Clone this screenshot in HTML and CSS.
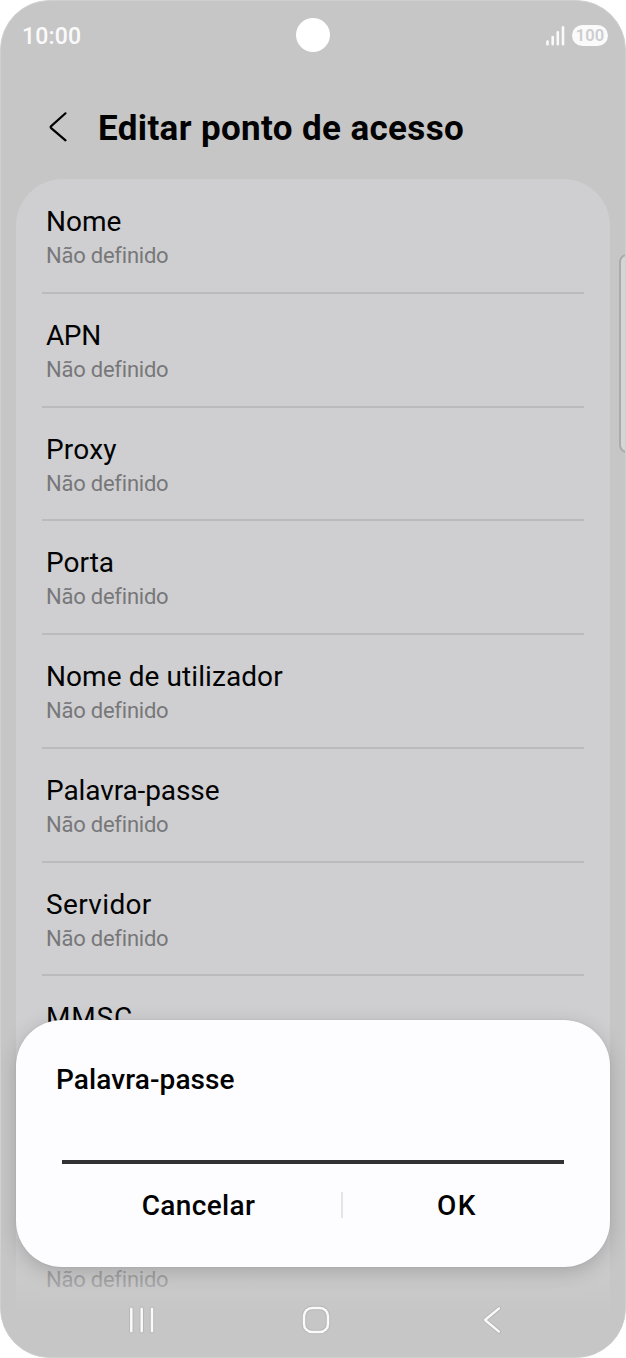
FILE: index.html
```html
<!DOCTYPE html>
<html lang="pt">
<head>
<meta charset="utf-8">
<title>Editar ponto de acesso</title>
<link rel="stylesheet" href="styles.css">
</head>
<body>
<div class="phone">
  <header class="status">
    <span class="time">10:00</span>
    <span class="camera"></span>
    <span class="indicators">
      <svg class="signal" width="20" height="21" viewBox="0 0 20 21"><path d="M1.5 16.5v2.7M6.7 12v7.2M11.8 7.3v11.9M17 2.3v16.9" fill="none" stroke="#fafafa" stroke-width="2.6" stroke-linecap="round"/></svg>
      <span class="battery">100</span>
    </span>
  </header>
  <div class="heading">
    <svg width="20" height="32" viewBox="0 0 20 32"><path d="M16.5 2.3 2.2 15.1q-1.1 1 0 2L16.5 29.3" fill="none" stroke="#000" stroke-width="2.2" stroke-linecap="round"/></svg>
    <h1>Editar ponto de acesso</h1>
  </div>
  <main class="card">
    <div class="row"><div class="label">Nome</div><div class="value">Não definido</div></div>
    <div class="row"><div class="label apn">APN</div><div class="value">Não definido</div></div>
    <div class="row"><div class="label proxy">Proxy</div><div class="value">Não definido</div></div>
    <div class="row"><div class="label">Porta</div><div class="value">Não definido</div></div>
    <div class="row"><div class="label user">Nome de utilizador</div><div class="value">Não definido</div></div>
    <div class="row"><div class="label pass">Palavra-passe</div><div class="value">Não definido</div></div>
    <div class="row"><div class="label server">Servidor</div><div class="value">Não definido</div></div>
    <div class="row"><div class="label mmsc">MMSC</div></div>
    <div class="row"></div>
    <div class="row"><div class="label"></div><div class="value">Não definido</div></div>
  </main>
  <div class="edge-handle"></div>
  <div class="fade"></div>
  <section class="dialog">
    <h2>Palavra-passe</h2>
    <div class="field"></div>
    <div class="actions">
      <div class="action cancel"><span>Cancelar</span></div>
      <div class="separator"></div>
      <div class="action ok"><span>OK</span></div>
    </div>
  </section>
  <nav class="nav">
    <svg width="30" height="32" viewBox="0 0 30 32"><g fill="none" stroke-linecap="round"><path d="M4.3 4.7v22.5M14.7 4.7v22.5M25 4.7v22.5" stroke="#b6b6b6" stroke-width="4.4"/><path d="M4.3 4.7v22.5M14.7 4.7v22.5M25 4.7v22.5" stroke="#fafafa" stroke-width="2.5"/></g></svg>
    <svg width="32" height="32" viewBox="0 0 32 32"><g fill="none"><rect x="4" y="4" width="24" height="24" rx="8" stroke="#b6b6b6" stroke-width="4.4"/><rect x="4" y="4" width="24" height="24" rx="8" stroke="#fafafa" stroke-width="2.5"/></g></svg>
    <svg width="20" height="32" viewBox="0 0 20 32"><g fill="none" stroke-linecap="round" stroke-linejoin="round"><path d="M17 4.3 3 16l14 11.6" stroke="#b6b6b6" stroke-width="4.2"/><path d="M17 4.3 3 16l14 11.6" stroke="#fafafa" stroke-width="2.3"/></g></svg>
  </nav>
</div>
</body>
</html>
```
FILE: styles.css
```css
* { box-sizing: border-box; }
body { margin: 0; background: #fff; font-family: Roboto, "Noto Sans", sans-serif; color: #020203; }
svg { display: block; flex: none; }
.phone {
  position: relative;
  width: 626px;
  height: 1358px;
  overflow: hidden;
  background: #c6c6c6;
  border: 1px solid #d0d0d1;
  border-radius: 50px;
}
.status {
  display: grid;
  grid-template-columns: 1fr 34px 1fr;
  align-items: center;
  height: 68px;
  padding: 0 17px 0 21px;
}
.time { margin-top: 2px; color: #fafafa; font-size: 23px; font-weight: 500; letter-spacing: 0.2px; }
.camera { width: 34px; height: 34px; margin-left: -2px; border-radius: 50%; background: #fff; }
.indicators { display: flex; justify-content: flex-end; align-items: center; gap: 6px; }
.battery {
  width: 36px;
  height: 21px;
  border-radius: 11px;
  background: #fafafa;
  color: #cdcdcf;
  font-size: 16.5px;
  font-weight: 600;
  line-height: 21px;
  text-align: center;
}
.heading { display: flex; align-items: center; height: 110px; padding: 6px 0 0 48px; gap: 29px; }
h1 { margin: 3px 0 0; font-size: 35px; line-height: 44px; font-weight: 700; letter-spacing: 0.36px; white-space: nowrap; }
.card {
  width: 594px;
  height: 1200px;
  margin-left: 15px;
  padding: 1px 26px 0;
  background: #cfcfd1;
  border-radius: 47px 47px 0 0;
}
.row { height: 113.75px; padding: 25px 0 0 4px; border-bottom: 2px solid #bbbbbd; }
.label { height: 34px; font-size: 28px; line-height: 34px; white-space: nowrap; }
.apn { letter-spacing: -0.4px; }
.proxy { letter-spacing: 0.2px; }
.user { letter-spacing: 0.08px; }
.pass { letter-spacing: -0.1px; }
.server { letter-spacing: 0.36px; }
.mmsc { letter-spacing: 0.8px; }
.value {
  font-size: 22px;
  line-height: 34px;
  letter-spacing: -0.23px;
  font-variant-ligatures: none;
  color: #77777a;
  white-space: nowrap;
}
.edge-handle {
  position: absolute;
  left: 618px;
  top: 253px;
  width: 20px;
  height: 199px;
  border: 2px solid #ababab;
  border-radius: 8px;
  background: #d5d5d5;
}
.fade {
  position: absolute;
  left: 0;
  right: 0;
  bottom: 0;
  height: 118px;
  background: linear-gradient(rgba(198,198,198,0.3), rgba(198,198,198,0.55) 35%, #c6c6c7 65%);
}
.dialog {
  position: absolute;
  left: 15px;
  top: 1019px;
  width: 594px;
  height: 247px;
  padding: 41px 46px 0 40px;
  border-radius: 46px;
  background: #fdfdff;
  box-shadow: 0 5px 20px rgba(0,0,0,0.18), 0 0 2px rgba(0,0,0,0.1);
}
h2 { margin: 0; font-size: 28px; line-height: 38px; font-weight: 500; letter-spacing: 0.1px; white-space: nowrap; }
.field { height: 65px; margin-left: 6px; border-bottom: 4px solid #323234; }
.actions { display: flex; align-items: center; height: 83px; margin-left: 6px; font-size: 28px; font-weight: 500; }
.action { padding-bottom: 1px; text-align: center; }
.cancel { width: 273px; letter-spacing: 0.35px; }
.ok { flex: 1; padding-left: 7px; letter-spacing: 1.4px; }
.separator { width: 2px; height: 26px; margin: 0 0 2px 6px; background: #e5e5e7; }
.nav {
  position: absolute;
  left: 126px;
  top: 1303px;
  display: grid;
  grid-template-columns: 173px 182px 20px;
  align-items: center;
}
```
